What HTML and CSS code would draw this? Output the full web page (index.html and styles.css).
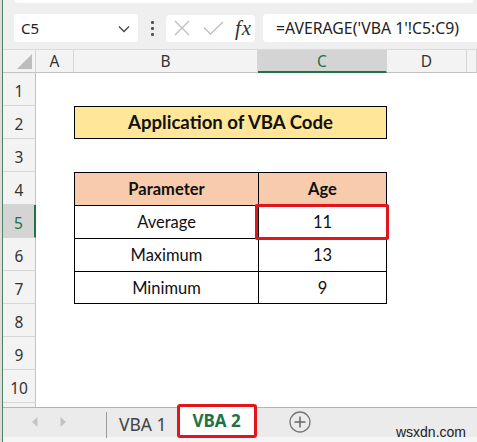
FILE: index.html
```html
<!DOCTYPE html>
<html lang="en">
<head>
    <meta charset="utf-8">
    <title>VBA 2</title>
    <link rel="stylesheet" href="styles.css">
</head>
<body>
<div class="window">
    <div class="edge"></div>
    <div class="main">
        <!-- formula bar -->
        <div class="toolbar">
            <div class="ribbon-lip"></div>
            <div class="bar-row">
                <div class="name-box">
                    <span>C5</span>
                    <svg width="12" height="8" viewBox="0 0 12 8"><path d="M1 1.5 L6 6.5 L11 1.5" fill="none" stroke="#444" stroke-width="1.3"/></svg>
                </div>
                <div class="grip"><i></i><i></i><i></i></div>
                <div class="fx-box">
                    <svg width="16" height="16" viewBox="0 0 16 16"><path d="M1 1 L15 15 M15 1 L1 15" stroke="#bdbdbd" stroke-width="1.3"/></svg>
                    <svg width="21" height="14" viewBox="0 0 21 14"><path d="M1 6.5 L7.5 13 L20 1" fill="none" stroke="#bdbdbd" stroke-width="1.3"/></svg>
                    <span class="fx">fx</span>
                </div>
                <div class="formula">=AVERAGE('VBA 1'!C5:C9)</div>
            </div>
        </div>

        <!-- sheet -->
        <div class="sheet">
            <div class="ch corner"><span class="tri"></span></div>
            <div class="ch">A</div>
            <div class="ch">B</div>
            <div class="ch sel">C</div>
            <div class="ch">D</div>
            <div class="ch"></div>

            <div class="rh">1</div><div></div><div></div><div></div><div></div><div></div>

            <div class="rh">2</div><div></div>
            <div class="cell title">Application of VBA Code</div>
            <div></div><div></div>

            <div class="rh">3</div><div></div><div></div><div></div><div></div><div></div>

            <div class="rh">4</div><div></div>
            <div class="cell head">Parameter</div>
            <div class="cell head last">Age</div>
            <div></div><div></div>

            <div class="rh sel">5</div><div></div>
            <div class="cell">Average</div>
            <div class="cell last active">11<span class="mark"></span></div>
            <div></div><div></div>

            <div class="rh">6</div><div></div>
            <div class="cell">Maximum</div>
            <div class="cell last">13</div>
            <div></div><div></div>

            <div class="rh">7</div><div></div>
            <div class="cell bottom">Minimum</div>
            <div class="cell last bottom">9</div>
            <div></div><div></div>

            <div class="rh">8</div><div></div><div></div><div></div><div></div><div></div>
            <div class="rh">9</div><div></div><div></div><div></div><div></div><div></div>
            <div class="rh">10</div><div></div><div></div><div></div><div></div><div></div>
            <div class="rh"></div><div></div><div></div><div></div><div></div><div></div>
        </div>

        <!-- sheet tabs -->
        <div class="tabs">
            <div class="nav">
                <svg width="6" height="10" viewBox="0 0 6 10"><path d="M5.5 0 L0 5 L5.5 10 Z" fill="#c4c4c4"/></svg>
                <svg width="6" height="10" viewBox="0 0 6 10"><path d="M0.5 0 L6 5 L0.5 10 Z" fill="#c4c4c4"/></svg>
            </div>
            <div class="tab">VBA 1</div>
            <div class="tab current">VBA 2</div>
            <svg class="add" width="22" height="22" viewBox="0 0 22 22"><circle cx="11" cy="11" r="10" fill="none" stroke="#777" stroke-width="1.3"/><path d="M11 5.5 V16.5 M5.5 11 H16.5" stroke="#666" stroke-width="1.5"/></svg>
        </div>
        <div class="stamp">wsxdn.com</div>
    </div>
</div>
</body>
</html>
```

FILE: styles.css
```css
* { margin:0; padding:0; box-sizing:border-box }
html, body { width:477px; height:442px; overflow:hidden; background:#fff }
body { font-family:"Noto Sans", "Open Sans", sans-serif; color:#333 }

.window { display:flex; height:442px }
.edge { width:3px; background:#dcdcdc; border-right:1px solid #4f8366 }
.main { flex:1; position:relative; display:flex; flex-direction:column; overflow:hidden }

/* formula bar */
.toolbar { height:50px; background:#efefef; border-bottom:1px solid #dadada }
.ribbon-lip { height:3px; margin:0 4px 0 12px; background:#fff; border-radius:0 0 5px 5px }
.bar-row { display:flex; align-items:center; height:28px; margin-top:11px; padding-left:11px }
.name-box { width:124px; height:28px; background:#fff; border-radius:4px; display:flex; align-items:center; justify-content:space-between; padding:0 8px 0 7px; font-size:15px; color:#222 }
.name-box svg { margin-top:2px }
.grip { width:28px; display:flex; flex-direction:column; align-items:center; gap:3px }
.grip i { display:block; width:3px; height:3px; background:#555; border-radius:1px }
.fx-box { width:89px; height:27px; background:#fff; border-radius:4px; display:flex; align-items:center; padding-left:8px; gap:13px }
.fx { font-family:"Liberation Serif", serif; font-style:italic; font-size:21px; line-height:27px; color:#333; margin-left:-2px; letter-spacing:1px }
.formula { flex:1; height:28px; margin-left:8px; background:#fff; border-radius:4px 0 0 4px; padding-left:13px; font-size:15.8px; line-height:28px; color:#222; white-space:nowrap }

/* grid */
.sheet { height:357px; display:grid; grid-template-columns:33px 38px 184px 129px 80px 1fr; grid-template-rows:23px repeat(11, 33px); overflow:hidden }
.ch { background:#f3f3f3; border-right:1px solid #d6d6d6; border-bottom:1px solid #c2c2c2; text-align:center; font-size:15.5px; line-height:22px; color:#333 }
.ch.sel { background:#d4d4d4; color:#217346; border-bottom:2px solid #217346 }
.corner { position:relative }
.corner .tri { position:absolute; right:3px; bottom:3px; width:0; height:0; border-left:15px solid transparent; border-bottom:15px solid #bdbdbd }
.rh { background:#f3f3f3; border-right:1px solid #c2c2c2; border-bottom:1px solid #d6d6d6; text-align:center; font-size:15.5px; line-height:36px; color:#333 }
.rh.sel { background:#d4d4d4; color:#217346; border-right:2px solid #217346 }

.cell { font-family:Lato, "Liberation Sans", sans-serif; font-size:16.5px; color:#111; text-align:center; line-height:32px; border-left:1px solid #000; border-top:1px solid #000 }
.cell.last { border-right:1px solid #000 }
.cell.bottom { border-bottom:1px solid #000 }
.title { grid-column:span 2; background:#ffe699; font-weight:bold; font-size:18.6px; line-height:30px; border:1px solid #000 }
.head { background:#f8cbad; font-weight:bold; font-size:16.5px }
.active { position:relative }
.mark { position:absolute; top:-2px; left:-4px; right:-3px; bottom:-2px; border:3px solid #e3141c; border-radius:2px }

/* tabs */
.tabs { flex:1; background:#ebebeb; border-top:1px solid #b5b5b5; display:flex; align-items:flex-start; position:relative; box-shadow:inset 0 -5px 0 #f5f5f5 }
.nav { width:103px; display:flex; gap:22px; padding:9px 0 0 29px }
.tab { height:26px; margin-top:4px; padding:0 10px 0 12px; border-left:1px solid #9a9a9a; font-size:17.5px; line-height:25px; color:#444 }
.tab.current { margin:-4px 0 0 0; height:34px; width:80px; padding:0; background:#fff; border:3px solid #e3141c; border-radius:3px; text-align:center; font-weight:bold; font-size:17px; line-height:27px; color:#217346 }
.add { margin:3px 0 0 32px }
.stamp { position:absolute; right:11px; bottom:2px; font-family:"Liberation Sans", Arial, sans-serif; font-size:14px; color:#222 }
```
